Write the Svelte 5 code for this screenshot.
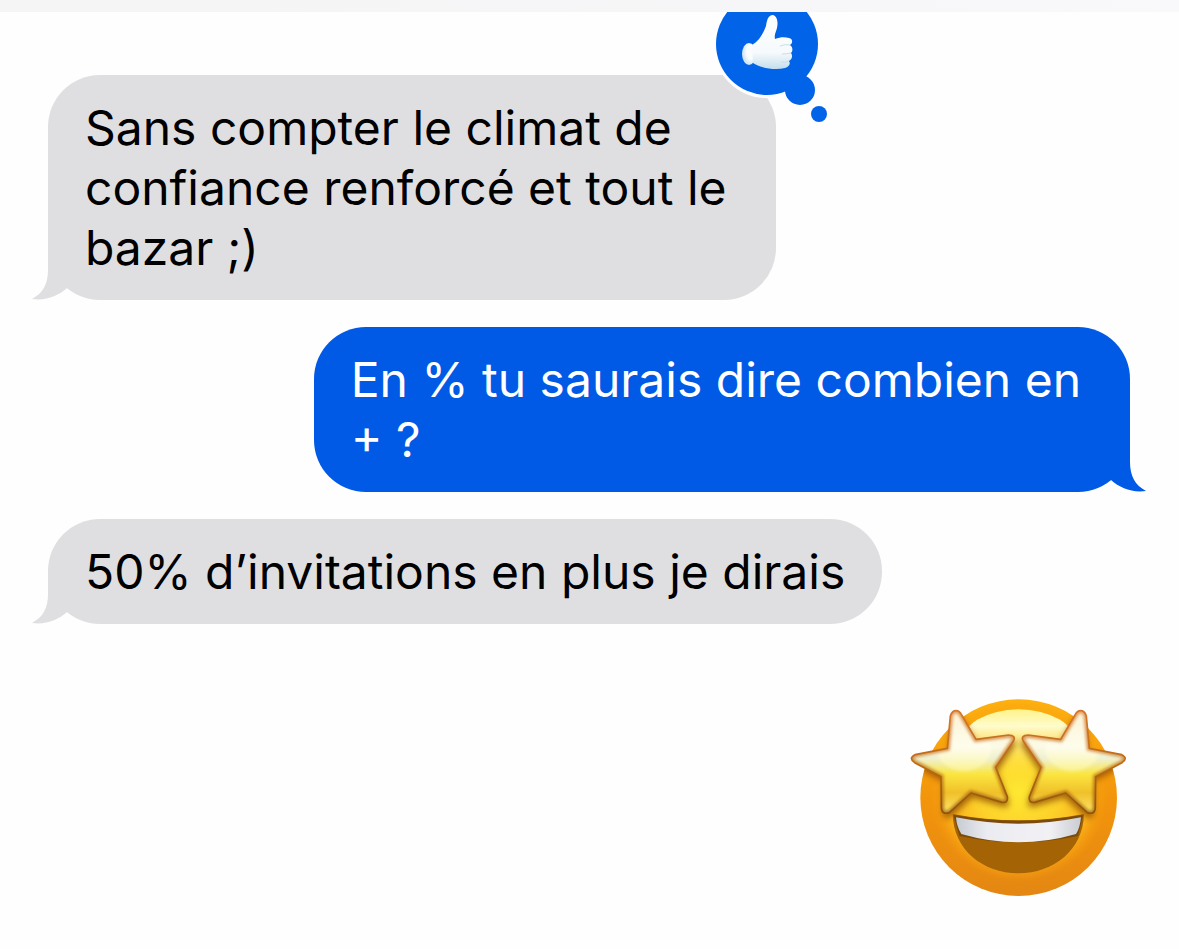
<script>
  const messages = [
    {
      from: 'them',
      lines: ['Sans compter le climat de', 'confiance renforcé et tout le', 'bazar ;)'],
      liked: true
    },
    { from: 'me', lines: ['En % tu saurais dire combien en', '+ ?'] },
    { from: 'them', lines: ['50% d’invitations en plus je dirais'] }
  ];

  const star =
    'M198 92 Q209 92 215 105 L258 178 L355 165 Q380 166 370 184 L317 262 L352 350 Q355 370 336 367 L243 339 L178 398 Q154 405 154 382 L153 290 L74 248 Q54 235 75 224 L172 205 L181 108 Q186 92 198 92 Z';
</script>

<div class="screen">
  <header class="topbar"></header>

  <main class="thread">
    {#each messages as message}
      <div class="bubble {message.from}" class:wrapped={message.lines.length > 1}>
        {#each message.lines as line}
          <span class="line">{line}</span>
        {/each}

        <svg class="tail" viewBox="0 0 36 54" aria-hidden="true">
          <path d="M16 0 V24 C16 38 11 47 0 53 C14 55 26 50 35 42 L30 0 Z" />
        </svg>

        {#if message.liked}
          <svg class="reaction" viewBox="-4 0 116 112" role="img" aria-label="J’aime">
            <defs>
              <linearGradient id="hand" x1="0" y1="0" x2="0" y2="1">
                <stop offset="0" stop-color="#ffffff" />
                <stop offset="0.7" stop-color="#f6fafc" />
                <stop offset="1" stop-color="#c4deec" />
              </linearGradient>
              <radialGradient id="cuff" cx="0.65" cy="0.4" r="0.65">
                <stop offset="0.5" stop-color="#fafcfe" />
                <stop offset="1" stop-color="#c8e1ef" />
              </radialGradient>
            </defs>
            <circle class="blue ring" cx="51" cy="32" r="51" />
            <circle class="blue" cx="84" cy="78" r="15" />
            <circle class="blue" cx="103" cy="102" r="8" />
            <ellipse cx="33" cy="42" rx="7" ry="11" fill="url(#cuff)" />
            <path
              d="M36 33 C43 29 47 22 50 14 C51 8 52 3 57 3 C62 5 62 11 61 16 C60 20 58 23 59 27 C64 25 69 25 73 26 C77 27 77 31 74 33 C77 35 77 39 75 41 C77 44 76 47 73 49 C75 52 73 55 69 56 C60 58 47 57 37 51 Z"
              fill="url(#hand)"
            />
            <path class="crease" d="M64 34 Q69 32 74 33 M66 42 Q70 42 75 41 M65 50 Q69 51 73 49" />
          </svg>
        {/if}
      </div>
    {/each}

    <svg class="emoji" viewBox="0 0 780 690" role="img" aria-label="Visage aux étoiles">
      <defs>
        <linearGradient id="face" x1="0" y1="0" x2="0" y2="1">
          <stop offset="0" stop-color="#fdb00f" />
          <stop offset="0.5" stop-color="#f3950b" />
          <stop offset="1" stop-color="#e48713" />
        </linearGradient>
        <radialGradient id="glow" cx="386" cy="335" r="270" gradientUnits="userSpaceOnUse">
          <stop offset="0" stop-color="#fde832" />
          <stop offset="0.45" stop-color="#fdd12a" />
          <stop offset="0.8" stop-color="#fab21a" />
          <stop offset="1" stop-color="#f69a0b" stop-opacity="0" />
        </radialGradient>
        <linearGradient id="shine" x1="0" y1="0" x2="0" y2="1">
          <stop offset="0" stop-color="#fff38a" />
          <stop offset="0.25" stop-color="#fffccc" />
          <stop offset="1" stop-color="#fdea38" stop-opacity="0" />
        </linearGradient>
        <linearGradient id="star" x1="0" y1="0" x2="0" y2="1">
          <stop offset="0" stop-color="#fdf3d8" />
          <stop offset="0.35" stop-color="#fbfae4" />
          <stop offset="0.47" stop-color="#eff0cf" />
          <stop offset="0.62" stop-color="#fbe53f" />
          <stop offset="0.8" stop-color="#f0c02a" />
          <stop offset="1" stop-color="#ffe668" />
        </linearGradient>
        <linearGradient id="edge" x1="0" y1="0" x2="0" y2="1">
          <stop offset="0" stop-color="#d5762a" />
          <stop offset="0.5" stop-color="#bf6b14" />
          <stop offset="1" stop-color="#8f540a" />
        </linearGradient>
        <linearGradient id="teeth">
          <stop offset="0" stop-color="#c6cbd2" />
          <stop offset="0.25" stop-color="#ebecf1" />
          <stop offset="0.75" stop-color="#f1f0f5" />
          <stop offset="1" stop-color="#c9ccd2" />
        </linearGradient>
        <linearGradient id="starlight" x1="0" y1="0" x2="0" y2="1">
          <stop offset="0" stop-color="#fffdec" stop-opacity="0" />
          <stop offset="0.5" stop-color="#fffdec" stop-opacity="0.8" />
          <stop offset="1" stop-color="#fdf59a" stop-opacity="0.8" />
        </linearGradient>
        <filter id="shadow" x="-20%" y="-20%" width="140%" height="140%">
          <feGaussianBlur stdDeviation="9" />
        </filter>
        <filter id="bevel" x="-20%" y="-20%" width="140%" height="140%">
          <feGaussianBlur stdDeviation="4" />
        </filter>
        <clipPath id="head"><circle cx="386" cy="353" r="295" /></clipPath>
        <clipPath id="inside"><path d={star} /></clipPath>
        <g id="eye">
          <path d={star} fill="url(#star)" />
          <g clip-path="url(#inside)">
            <ellipse cx="222" cy="205" rx="82" ry="68" fill="url(#starlight)" filter="url(#bevel)" />
            <path class="bevel" d={star} stroke="url(#edge)" filter="url(#bevel)" />
          </g>
          <path class="outline" d={star} stroke="url(#edge)" />
        </g>
      </defs>

      <circle cx="386" cy="353" r="295" fill="url(#face)" />
      <circle cx="386" cy="335" r="270" fill="url(#glow)" />
      <ellipse cx="386" cy="190" rx="172" ry="102" fill="url(#shine)" />
      <g class="shade" clip-path="url(#head)">
        <g filter="url(#shadow)">
          <path d={star} transform="translate(4 14)" />
          <path d={star} transform="translate(766 14) scale(-1 1)" />
        </g>
      </g>

      <path d="M188 402 Q386 440 582 402 C580 510 490 580 386 580 C280 580 190 510 188 402 Z" fill="#a46405" />
      <path d="M190 404 Q386 440 580 404 L564 468 Q386 506 208 468 Z" fill="#7c4b0a" />
      <path d="M198 412 Q386 450 573 412 Q570 444 558 462 Q386 512 214 462 Q200 440 198 412 Z" fill="url(#teeth)" />

      <use href="#eye" />
      <use href="#eye" transform="translate(770 0) scale(-1 1)" />
    </svg>
  </main>
</div>

<style>
  :global(body) {
    margin: 0;
    background: #fefefe;
  }

  .screen {
    font-family: Inter, 'Liberation Sans', sans-serif;
    font-size: 48px;
    line-height: 60px;
    color: #000;
  }

  .topbar {
    height: 12px;
    background: linear-gradient(90deg, #f5f5f5, #f6f6f8 60%, #f9f9fb);
  }

  .thread {
    display: flex;
    flex-direction: column;
    align-items: flex-start;
    gap: 27px;
    padding: 63px 49px 38px 48px;
  }

  .bubble {
    position: relative;
    box-sizing: border-box;
    padding: 23px 37px 22px;
    border-radius: 52px;
  }

  .wrapped {
    padding-right: 49px;
  }

  .line {
    display: block;
    white-space: nowrap;
  }

  .them {
    --fill: #dfdfe2;
    background: var(--fill);
  }

  .me {
    --fill: #005ae6;
    align-self: flex-end;
    background: var(--fill);
    color: #fff;
  }

  .tail {
    position: absolute;
    bottom: 0;
    left: -16px;
    width: 36px;
    height: 54px;
    fill: var(--fill);
  }

  .me .tail {
    right: -16px;
    left: auto;
    transform: scaleX(-1);
  }

  .reaction {
    position: absolute;
    top: -63px;
    right: -52px;
    width: 116px;
    height: 112px;
  }

  .blue {
    fill: #0063e8;
  }

  .ring {
    stroke: #fefefe;
    stroke-width: 6px;
    paint-order: stroke;
  }

  .crease {
    fill: none;
    stroke: #c6dfea;
    stroke-width: 1px;
  }

  .emoji {
    align-self: flex-end;
    width: 260px;
    height: 230px;
    margin: 29px -20px 0 0;
  }

  .shade {
    fill: #8a4700;
    opacity: 0.75;
  }

  .outline {
    fill: none;
    stroke-width: 5px;
    stroke-linejoin: round;
  }

  .bevel {
    fill: none;
    stroke-width: 16px;
    opacity: 0.7;
  }
</style>
